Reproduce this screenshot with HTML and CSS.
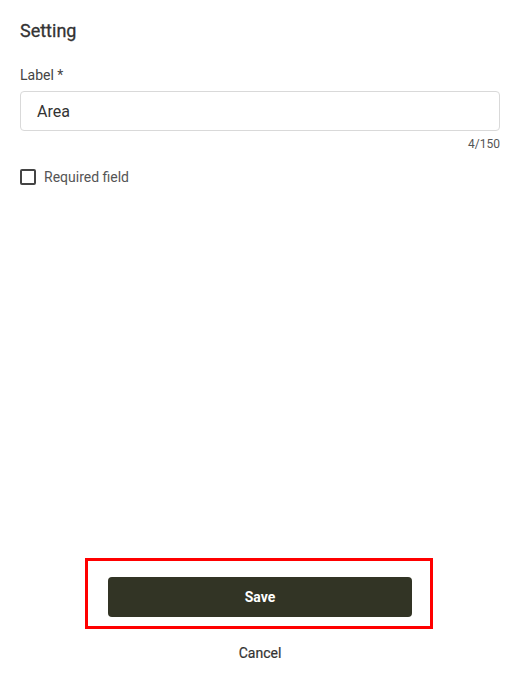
FILE: index.html
```html
<!DOCTYPE html>
<html>
<head>
<meta charset="utf-8">
<link rel="stylesheet" href="styles.css">
</head>
<body>
<div class="panel">
  <div class="content">
    <h1 class="title">Setting</h1>
    <div class="field">
      <label class="field-label">Label *</label>
      <div class="input">Area</div>
      <div class="counter">4/150</div>
    </div>
    <label class="check">
      <span class="box"></span>
      <span class="check-text">Required field</span>
    </label>
  </div>
  <div class="footer">
    <div class="highlight">
      <button class="save">Save</button>
    </div>
    <button class="cancel">Cancel</button>
  </div>
</div>
</body>
</html>
```
FILE: styles.css
```css
html, body {
  margin: 0;
  padding: 0;
  background: #fff;
}
body {
  font-family: Roboto, "Liberation Sans", sans-serif;
  color: #333;
}
.panel {
  width: 518px;
  height: 692px;
  box-sizing: border-box;
  display: flex;
  flex-direction: column;
  padding: 0 18px 0 20px;
}
.content {
  flex: 1;
}
.title {
  margin: 20px 0 0;
  font-size: 18px;
  font-weight: 400;
  line-height: 22px;
  color: #333;
  -webkit-text-stroke: 0.3px #333;
}
.field {
  margin-top: 24px;
}
.field-label {
  display: block;
  font-size: 14px;
  line-height: 18px;
  color: #444;
}
.input {
  margin-top: 7px;
  height: 40px;
  box-sizing: border-box;
  border: 1px solid #d9d9d9;
  border-radius: 4px;
  padding: 0 16px;
  display: flex;
  align-items: center;
  font-size: 16px;
  color: #333;
}
.counter {
  text-align: right;
  font-size: 12px;
  line-height: 16px;
  margin-top: 5px;
  color: #555;
}
.check {
  margin-top: 17px;
  display: flex;
  align-items: center;
  gap: 8px;
}
.box {
  width: 16px;
  height: 16px;
  box-sizing: border-box;
  border: 2px solid #444;
  border-radius: 2px;
}
.check-text {
  font-size: 14px;
  color: #555;
}
.footer {
  display: flex;
  flex-direction: column;
  align-items: center;
  padding-bottom: 29px;
}
.highlight {
  width: 348px;
  box-sizing: border-box;
  border: 3px solid #ff0000;
  padding: 16px 18px 9px 20px;
  margin-right: 2px;
}
.save {
  display: block;
  width: 100%;
  height: 40px;
  border: none;
  border-radius: 4px;
  background: #323425;
  color: #fff;
  font-family: Roboto, "Liberation Sans", sans-serif;
  font-size: 14px;
  font-weight: 700;
}
.cancel {
  margin-top: 14px;
  background: none;
  border: none;
  height: 20px;
  font-family: Roboto, "Liberation Sans", sans-serif;
  font-size: 14px;
  font-weight: 400;
  -webkit-text-stroke: 0.2px #333;
  color: #333;
}
```
